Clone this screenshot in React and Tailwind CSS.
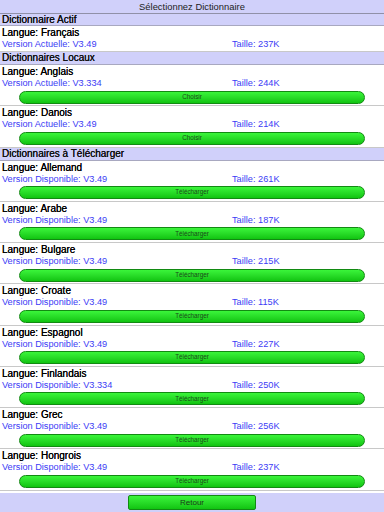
import React from "react";

const font = { fontFamily: '"Liberation Sans", Arial, sans-serif' };

function Header({ children, tall }) {
  return (
    <div className={(tall ? "h-[13px] leading-[12px] " : "h-[12px] leading-[11px] ") + "bg-[#d0d0fa] border-b border-[#a8a8c0] pl-[2px] text-[10px] text-[#111] [text-shadow:0_0_0.3px_#000]"}>
      {children}
    </div>
  );
}

function Item({ lang, label, version, size, button }) {
  return (
    <div className="border-b border-[#c8c8c8] bg-white">
      <div className="h-[12px] pl-[2px] text-[10px] leading-[13px] text-black [text-shadow:0_0_0.3px_#000]">Langue: {lang}</div>
      <div className="flex h-[12px] text-[9.2px] leading-[12px] text-[#3c3cf5]">
        <div className="w-[232px] pl-[2px]">{label}: {version}</div>
        <div>Taille: {size}</div>
      </div>
      {button ? (
        <div className="flex h-[16.28px] items-start pt-[1.5px] pl-[19px] pr-[19px]">
          <div className="flex h-[13px] w-full items-center justify-center rounded-full border border-[#128a12] bg-gradient-to-b from-[#3af53a] to-[#10c410] text-[6.3px] leading-none text-[#1a4a1a]">
            {button}
          </div>
        </div>
      ) : null}
    </div>
  );
}

const downloads = [
  ["Allemand", "V3.49", "261K"],
  ["Arabe", "V3.49", "187K"],
  ["Bulgare", "V3.49", "215K"],
  ["Croate", "V3.49", "115K"],
  ["Espagnol", "V3.49", "227K"],
  ["Finlandais", "V3.334", "250K"],
  ["Grec", "V3.49", "256K"],
  ["Hongrois", "V3.49", "237K"],
];

export default function App() {
  return (
    <div style={font} className="flex h-[512px] w-[384px] flex-col overflow-hidden bg-white">
      <div className="h-[14px] shrink-0 border-b border-[#9090a8] bg-[#d0d0fa] text-center text-[9.4px] leading-[13px] text-[#222]">
        Sélectionnez Dictionnaire
      </div>
      <div className="min-h-0 flex-1 overflow-hidden">
        <Header>Dictionnaire Actif</Header>
        <div className="pb-[1px] border-b border-[#c8c8c8]">
          <div className="h-[12px] pl-[2px] text-[10px] leading-[13px] text-black [text-shadow:0_0_0.3px_#000]">Langue: Français</div>
          <div className="flex h-[12px] text-[9.2px] leading-[12px] text-[#3c3cf5]">
            <div className="w-[232px] pl-[2px]">Version Actuelle: V3.49</div>
            <div>Taille: 237K</div>
          </div>
        </div>
        <Header tall>Dictionnaires Locaux</Header>
        <Item lang="Anglais" label="Version Actuelle" version="V3.334" size="244K" button="Choisir" />
        <Item lang="Danois" label="Version Actuelle" version="V3.49" size="214K" button="Choisir" />
        <Header tall>Dictionnaires à Télécharger</Header>
        {downloads.map(([l, v, s]) => (
          <Item key={l} lang={l} label="Version Disponible" version={v} size={s} button="Télécharger" />
        ))}
      </div>
      <div className="flex h-[19px] shrink-0 items-start justify-center bg-[#d0d0fa] pt-[2px]">
        <div className="flex h-[15px] w-[128px] items-center justify-center rounded-[2px] border border-[#128a12] bg-gradient-to-b from-[#3af53a] to-[#10c410] text-[8px] leading-none text-[#1a3a1a]">
          Retour
        </div>
      </div>
    </div>
  );
}
